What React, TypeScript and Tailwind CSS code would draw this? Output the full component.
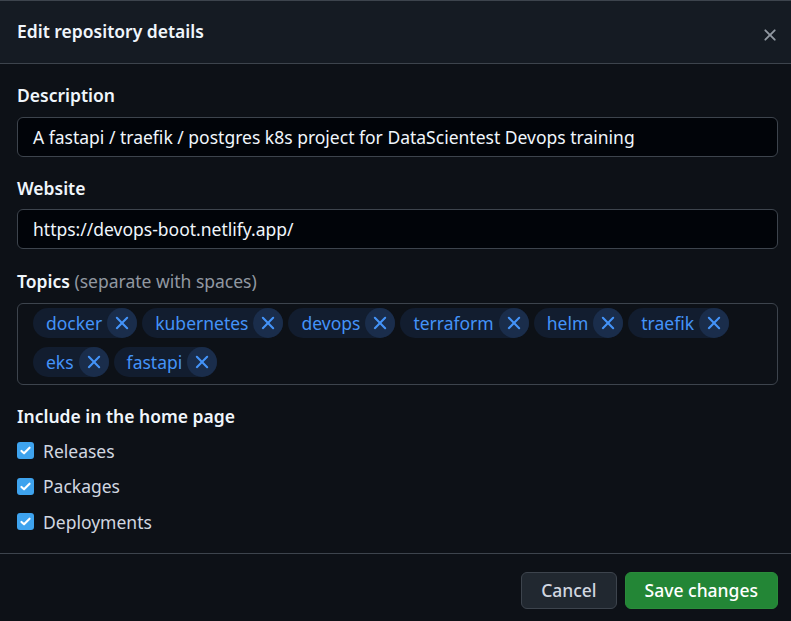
import React from "react";

const topics = ["docker", "kubernetes", "devops", "terraform", "helm", "traefik", "eks", "fastapi"];

const sections = ["Releases", "Packages", "Deployments"];

function XIcon({ className, size = 16 }: { className?: string; size?: number }) {
  return (
    <svg viewBox="0 0 16 16" width={size} height={size} fill="currentColor" className={className}>
      <path d="M3.72 3.72a.75.75 0 0 1 1.06 0L8 6.94l3.22-3.22a.749.749 0 0 1 1.275.326.749.749 0 0 1-.215.734L9.06 8l3.22 3.22a.749.749 0 0 1-.326 1.275.749.749 0 0 1-.734-.215L8 9.06l-3.22 3.22a.751.751 0 0 1-1.042-.018.751.751 0 0 1-.018-1.042L6.94 8 3.72 4.78a.75.75 0 0 1 0-1.06Z" />
    </svg>
  );
}

function Checkbox() {
  return (
    <span className="flex h-[17px] w-[17px] items-center justify-center rounded-[3px] bg-[#3ea3ee]">
      <svg viewBox="0 0 16 16" width="13" height="13" fill="none" stroke="white" strokeWidth="2.6" strokeLinecap="round" strokeLinejoin="round">
        <path d="M3 8.5l3.2 3L13 4.5" />
      </svg>
    </span>
  );
}

export default function App() {
  return (
    <div
      className="h-[621px] w-[791px] overflow-hidden bg-[#0d1117] text-[17.5px] text-[#f0f6fc]"
      style={{ fontFamily: '"Noto Sans", "Liberation Sans", sans-serif' }}
    >
      {/* header */}
      <div className="flex h-[64px] items-center justify-between border-t border-b border-[#3d444d] bg-[#151b23] pl-[17px] pr-[11px]">
        <h1 className="mb-[2px] text-[17.5px] font-semibold text-[#f0f6fc]">Edit repository details</h1>
        <XIcon size={20} className="mt-[5px] text-[#9198a1]" />
      </div>

      {/* body */}
      <div className="pl-[17px] pr-[13px] pt-[18px]">
        <label className="block font-semibold leading-[26px]">Description</label>
        <div className="mt-[9px] flex h-[40px] items-center rounded-[6px] border border-[#3d444d] bg-[#010409] px-[15px] text-[#f0f6fc]">
          A fastapi / traefik / postgres k8s project for DataScientest Devops training
        </div>

        <label className="mt-[18px] block font-semibold leading-[26px]">Website</label>
        <div className="mt-[8px] flex h-[40px] items-center rounded-[6px] border border-[#3d444d] bg-[#010409] px-[15px] text-[#f0f6fc]">
          https://devops-boot.netlify.app/
        </div>

        <label className="mt-[19px] block leading-[26px]">
          <span className="font-semibold">Topics</span>{" "}
          <span className="text-[#9198a1]">(separate with spaces)</span>
        </label>
        <div className="mt-[9px] flex h-[82px] flex-wrap content-start gap-x-[5px] gap-y-[9px] rounded-[6px] border border-[#3d444d] bg-[#0d1117] px-[15px] pt-[4px]">
          {topics.map((t) => (
            <span key={t} className="flex h-[30px] items-center rounded-full bg-[#121d2f] pl-[13px] text-[#4493f8]">
              <span className="pr-[5px]">{t}</span>
              <span className="flex h-[30px] w-[30px] items-center justify-center rounded-full bg-[#1a2d4b]">
                <XIcon size={22} />
              </span>
            </span>
          ))}
        </div>

        <div className="mt-[18px] font-semibold leading-[26px]">Include in the home page</div>
        <div className="mt-[4px] flex flex-col">
          {sections.map((s) => (
            <label key={s} className="flex h-[35.5px] items-center gap-[9px] text-[#d1d7e0]">
              <Checkbox />
              {s}
            </label>
          ))}
        </div>
      </div>

      {/* footer */}
      <div className="mt-[13px] flex justify-end gap-[8px] border-t border-[#3d444d] pl-[13px] pr-[13px] pt-[18px]">
        <button className="h-[37px] rounded-[6px] border border-[#3d444d] bg-[#212830] px-[19px] font-medium text-[#d1d7e0]">
          Cancel
        </button>
        <button className="h-[37px] rounded-[6px] border border-[#2a8b3a] bg-[#238636] px-[19px] font-medium text-white">
          Save changes
        </button>
      </div>
    </div>
  );
}
